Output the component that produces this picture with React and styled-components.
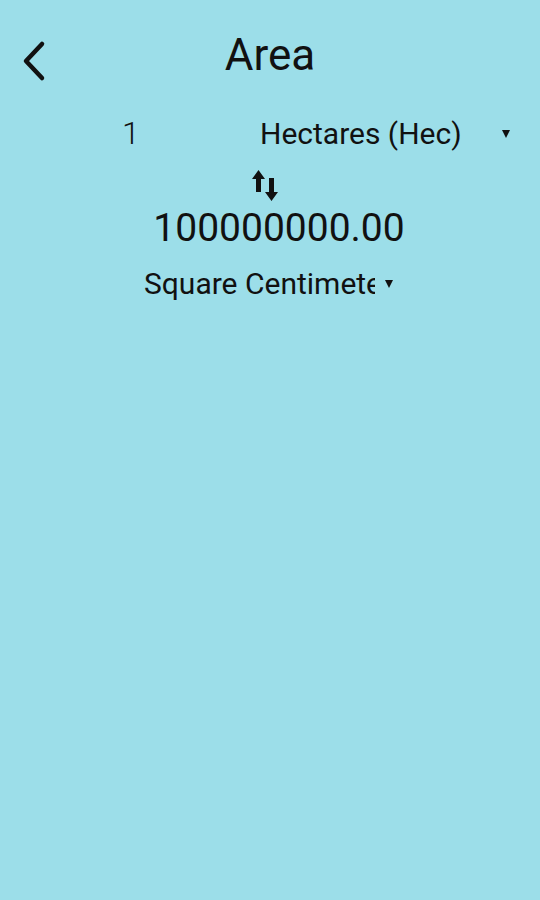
import React from 'react'
import styled, { createGlobalStyle } from 'styled-components'

const Global = createGlobalStyle`
  html, body {
    margin: 0;
    padding: 0;
    background: #9cdee9;
  }
  body {
    font-family: Roboto, "Noto Sans", sans-serif;
    color: #111;
  }
`

const Screen = styled.div`
  width: 540px;
  height: 900px;
  background: #9cdee9;
  display: flex;
  flex-direction: column;
`

const Header = styled.div`
  height: 80px;
  display: grid;
  grid-template-columns: 60px 1fr 60px;
  align-items: start;
  padding-top: 33px;
  box-sizing: border-box;
`

const BackBtn = styled.div`
  display: flex;
  justify-content: flex-end;
  padding-top: 7px;
  padding-right: 12px;
`

const Title = styled.div`
  font-size: 44px;
  line-height: 1;
  text-align: center;
`

const FromRow = styled.div`
  display: flex;
  align-items: baseline;
  margin-top: 36px;
`

const Amount = styled.div`
  width: 138px;
  padding-left: 122px;
  box-sizing: content-box;
  font-size: 32px;
  line-height: 1;
  font-weight: 300;
`

const Spinner = styled.div`
  display: flex;
  align-items: center;
  width: ${p => p.$w}px;
  font-size: 30px;
  line-height: 1.2;
`

const SpinnerText = styled.span`
  flex: ${p => (p.$max ? '0 0 auto' : '1')};
  max-width: ${p => (p.$max ? `${p.$max}px` : 'none')};
  white-space: nowrap;
  overflow: hidden;
`

const Caret = styled.span`
  width: 0;
  height: 0;
  border-left: 4px solid transparent;
  border-right: 4px solid transparent;
  border-top: 8px solid #111;
  margin-left: ${p => p.$gap}px;
  margin-right: ${p => p.$right}px;
`

const ToBlock = styled.div`
  display: flex;
  flex-direction: column;
  align-items: center;
`

const SwapIcon = styled.div`
  margin-top: 18px;
  margin-left: -10px;
  height: 30px;
`

const Result = styled.div`
  margin-top: 9px;
  margin-left: 18px;
  font-size: 39px;
  line-height: 1;
`

const ToSpinner = styled(Spinner)`
  margin-top: 18px;
`

function Chevron() {
  return (
    <svg width="28" height="42" viewBox="0 0 28 42">
      <polyline points="22,4 6,21 22,38" fill="none" stroke="#111" strokeWidth="4.5" strokeLinecap="round" strokeLinejoin="round" />
    </svg>
  )
}

function Swap() {
  return (
    <svg width="26" height="31" viewBox="0 0 26 31">
      <path d="M6.5 0 L0 9 H4 V22 H9 V9 H13 Z" fill="#111" />
      <path d="M19.5 31 L13 22 H17 V8 H22 V22 H26 Z" fill="#111" />
    </svg>
  )
}

export default function App() {
  return (
    <Screen>
      <Global />
      <Header>
        <BackBtn><Chevron /></BackBtn>
        <Title>Area</Title>
        <div />
      </Header>
      <FromRow>
        <Amount>1</Amount>
        <Spinner $w={260}>
          <SpinnerText>Hectares (Hec)</SpinnerText>
          <Caret $gap={0} $right={10} />
        </Spinner>
      </FromRow>
      <ToBlock>
        <SwapIcon><Swap /></SwapIcon>
        <Result>100000000.00</Result>
        <ToSpinner $w={252}>
          <SpinnerText $max={231}>Square Centimeter</SpinnerText>
          <Caret $gap={10} $right={0} />
        </ToSpinner>
      </ToBlock>
    </Screen>
  )
}
